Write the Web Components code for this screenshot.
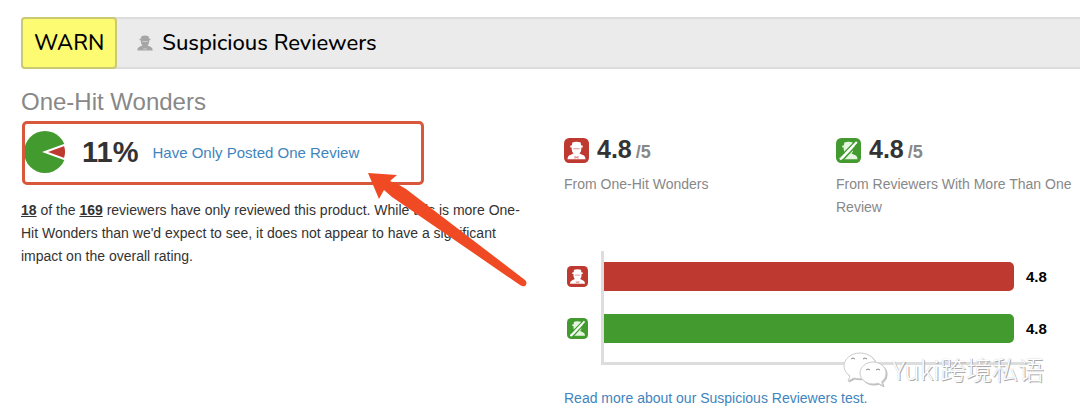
<!DOCTYPE html>
<html lang="en">
<head>
<meta charset="utf-8">
<title>Suspicious Reviewers</title>
<style>
    body {
        margin: 0;
        background: #fff; color: #333;
        font: 14px/23px "Liberation Sans", Arial, sans-serif;
    }
</style>
</head>
<body>
<review-report></review-report>
<script>
const bust = `
    <path d="M7.6 7 L8 4.4 Q12 3 16 4.4 L16.400 7 L18 7.400 V9 H6 V7.400 Z"/>
    <path d="M7.400 8.600 H16.600 V11 Q16.400 14 14.600 15 V17 H9.400 V15 Q7.600 14 7.400 11 Z"/>
    <path d="M3.400 20.400 Q3.400 17 6 16.200 L9.600 14.600 L12 16 L14.400 14.600 L18 16.200 Q20.600 17 20.600 20.400 Z"/>`;

customElements.define('reviewer-icon', class extends HTMLElement {
    constructor() {
        super();
        this.shadow = this.attachShadow( {mode: 'open'} );
    }
    connectedCallback() {
        const kind = this.getAttribute('kind');
        const drawings = {
            plain: `<g fill="#a5a5a5">${bust}</g><path d="M9 10.400h6M10 18.6h4" stroke="#d3d3d3"/>`,
            one: `<rect width="24" height="24" rx="5" fill="#be3a31"/><g fill="#fff">${bust}</g>
                <path d="M9 10.400h6M10 17.800l4 1.600m0-1.600l-4 1.600" stroke="#dd8f8a"/>`,
            many: `<rect width="24" height="24" rx="5" fill="#439a2f"/><g fill="#e4f6df">${bust}</g>
                <path d="M3.6 18.6L18.4 3.4M5.8 22L21 5.8" stroke="#439a2f" stroke-width="1.5"/>
                <path d="M4 20.6L20 3.8" stroke="#fff" stroke-width="2"/>`
        };
        this.shadow.innerHTML = `
        <style>
            :host { display: block; flex: none; width: var(--size, 25px); height: var(--size, 25px); }
            svg { display: block; width: 100%; height: 100%; }
        </style>
        <svg viewBox="${kind == 'plain' ? '2 2 20 20' : '0 0 24 24'}" aria-hidden="true">${drawings[kind]}</svg>`;
    }
});

customElements.define('test-header', class extends HTMLElement {
    constructor() {
        super();
        this.attachShadow( {mode: 'open'} ).innerHTML = `
        <style>
            :host {
                display: flex; align-items: stretch;
                border: 2px solid #dcdcdc; border-right: 0; border-radius: 4px 0 0 4px;
                background: #ebebeb; color: #000;
                font: 500 22px/28px Nunito, Lato, sans-serif;
            }
            .status {
                margin: -2px 0 -2px -2px; padding: 10px 11px;
                border: 2px solid #cbca72; border-radius: 4px;
                background: #fcfb72;
            }
            h1 {
                display: flex; align-items: center; gap: 8px;
                margin: 0; padding-left: 19px;
                font: inherit;
            }
            reviewer-icon { --size: 18px; }
        </style>
        <div class="status"><slot name="status"></slot></div>
        <h1><reviewer-icon kind="plain"></reviewer-icon><slot></slot></h1>`;
    }
});

customElements.define('share-pie', class extends HTMLElement {
    constructor() {
        super();
        this.shadow = this.attachShadow( {mode: 'open'} );
    }
    connectedCallback() {
        const half = Math.PI * parseFloat(this.getAttribute('share'));
        const [x, y] = [21 * Math.cos(half), 21 * Math.sin(half)];
        this.shadow.innerHTML = `
        <style>
            :host { display: block; flex: none; width: 42px; height: 42px; }
            svg { display: block; }
        </style>
        <svg width="42" height="42" viewBox="-21 -21 42 42" aria-hidden="true">
            <circle r="21" fill="#439a2f"/>
            <path d="M0 0 L${x} ${-y} A21 21 0 0 1 ${x} ${y} Z" fill="#be3a31" stroke="#fff" stroke-width="2"/>
        </svg>`;
    }
});

customElements.define('marked-share', class extends HTMLElement {
    constructor() {
        super();
        this.attachShadow( {mode: 'open'} ).innerHTML = `
        <style>
            :host {
                display: flex; align-items: center;
                position: relative; box-sizing: border-box;
                height: 64px; padding: 0 0 2px 3px;
                font-size: 15px;
            }
            .value { margin: 0 14px 0 16px; font-weight: bold; font-size: 29px; line-height: 34px; }
            .frame {
                position: absolute; inset: 0 auto 0 1px;
                box-sizing: border-box; width: 402px;
                border: 3px solid #d9573a; border-radius: 5px;
                pointer-events: none;
            }
            .arrow { position: absolute; left: 345px; top: 50px; pointer-events: none; }
        </style>
        <slot name="chart"></slot>
        <span class="value"><slot name="value"></slot></span>
        <slot></slot>
        <div class="frame"></div>
        <svg class="arrow" width="164" height="118" viewBox="366 171 164 118" aria-hidden="true">
            <path d="M368 173 L397 175 L390 181 Q398 184 406 189 L525 280 Q528 283 525 286 Q523 287 520 285 L392 197 L384 190 L379 199 Z" fill="#ef4a24"/>
        </svg>`;
    }
});

customElements.define('rating-stat', class extends HTMLElement {
    constructor() {
        super();
        this.shadow = this.attachShadow( {mode: 'open'} );
    }
    connectedCallback() {
        this.shadow.innerHTML = `
        <style>
            :host { display: block; color: #888; }
            .score { display: flex; align-items: center; gap: 8px; }
            .number { font-weight: bold; font-size: 18px; line-height: 28px; }
            b { margin-right: 4px; color: #333; font-size: 25px; }
            p { margin: 7px 0 0; }
        </style>
        <div class="score">
            <reviewer-icon kind="${this.getAttribute('kind')}"></reviewer-icon>
            <span class="number"><b>${this.getAttribute('score')}</b>/5</span>
        </div>
        <p><slot></slot></p>`;
    }
});

customElements.define('rating-bar', class extends HTMLElement {
    constructor() {
        super();
        this.shadow = this.attachShadow( {mode: 'open'} );
    }
    connectedCallback() {
        const score = parseFloat(this.getAttribute('score'));
        const kind = this.getAttribute('kind');
        this.shadow.innerHTML = `
        <style>
            :host { display: grid; grid-template-columns: 40px 1fr; align-items: center; }
            reviewer-icon { --size: 21px; margin-left: 3px; }
            .track { display: flex; align-items: center; gap: 12px; }
            .bar {
                flex: none; width: ${score / 5 * 100}%; height: 29px;
                border-radius: 0 5px 5px 0;
                background: ${kind == 'one' ? '#be3a31' : '#439a2f'};
            }
            b { color: #000; font-size: 15px; }
        </style>
        <reviewer-icon kind="${kind}"></reviewer-icon>
        <div class="track"><div class="bar"></div><b>${score}</b></div>`;
    }
});

customElements.define('rating-chart', class extends HTMLElement {
    constructor() {
        super();
        this.attachShadow( {mode: 'open'} ).innerHTML = `
        <style>
            :host { display: grid; padding-right: 47px; }
            .axes, .rows { grid-area: 1 / 1; }
            .axes { margin-left: 37px; border: solid #ddd; border-width: 0 0 3px 3px; }
            .rows { display: grid; gap: 23px; padding: 11px 0 22px; }
        </style>
        <div class="axes"></div>
        <div class="rows"><slot></slot></div>`;
    }
});

customElements.define('account-mark', class extends HTMLElement {
    constructor() {
        super();
        this.attachShadow( {mode: 'open'} ).innerHTML = `
        <style>
            :host {
                display: flex; align-items: center; gap: 5px;
                color: #fff;
                font: 300 26px/32px "Noto Sans CJK SC", sans-serif;
                text-shadow: 1px 1px 0 #aaa, 0 0 1px #bbb;
                white-space: nowrap;
            }
            svg { filter: drop-shadow(1px 1px 0 #bbb); }
        </style>
        <svg width="44" height="34" viewBox="0 0 44 34" fill="#fff" stroke="#ccc" aria-hidden="true">
            <path d="M17 1C8 1 1 7 1 14c0 4 2 7 6 10l-2 5 6-3c2 .6 4 .8 6 .8 9 0 16-6 16-13S26 1 17 1Z"/>
            <path d="M30 10c-7 0-13 5-13 11s6 11 13 11c2 0 3-.3 5-.8l5 2.6-1.4-4c3-2 4.400-5 4.400-8.800C43 15 37 10 30 10Z"/>
            <path d="M8 7q2-2 4 0M20 7q2-2 4 0M23 18q2-2 4 0M33 18q2-2 4 0" fill="none" stroke="#888"/>
        </svg>
        <span><slot></slot></span>`;
    }
});

customElements.define('review-report', class extends HTMLElement {
    constructor() {
        super();
        this.attachShadow( {mode: 'open'} ).innerHTML = `
        <style>
            :host { display: block; position: relative; padding: 17px 0 6px 21px; }
            .columns {
                display: grid; grid-template-columns: 1fr 1fr; gap: 29px;
                margin-top: 18px; padding-right: 2px;
            }
            h2 { margin: 0 0 5px; color: #888; font-weight: normal; font-size: 24px; line-height: 29px; }
            a { color: #3f84bd; text-decoration: none; }
            .summary { margin: 14px 0 0; padding-right: 8px; }
            .summary b { text-decoration: underline; }
            .stats { display: grid; grid-template-columns: 1fr 1fr; gap: 30px; margin-top: 48px; }
            rating-chart { margin: 32px 0 22px; }
            account-mark { position: absolute; right: 36px; bottom: 30px; }
        </style>
        <test-header><span slot="status">WARN</span>Suspicious Reviewers</test-header>
        <div class="columns">
            <section>
                <h2>One-Hit Wonders</h2>
                <marked-share>
                    <share-pie slot="chart" share="0.11"></share-pie>
                    <span slot="value">11%</span>
                    <a href="#one-hit">Have Only Posted One Review</a>
                </marked-share>
                <p class="summary"><b>18</b> of the <b>169</b> reviewers have only reviewed this product. While this is more One-Hit Wonders than we'd expect to see, it does not appear to have a significant impact on the overall rating.</p>
            </section>
            <section>
                <div class="stats">
                    <rating-stat kind="one" score="4.8">From One-Hit Wonders</rating-stat>
                    <rating-stat kind="many" score="4.8">From Reviewers With More Than One Review</rating-stat>
                </div>
                <rating-chart>
                    <rating-bar kind="one" score="4.8"></rating-bar>
                    <rating-bar kind="many" score="4.8"></rating-bar>
                </rating-chart>
                <a href="#about">Read more about our Suspicious Reviewers test.</a>
            </section>
        </div>
        <account-mark>Yuki跨境私语</account-mark>`;
    }
});
</script>
</body>
</html>
